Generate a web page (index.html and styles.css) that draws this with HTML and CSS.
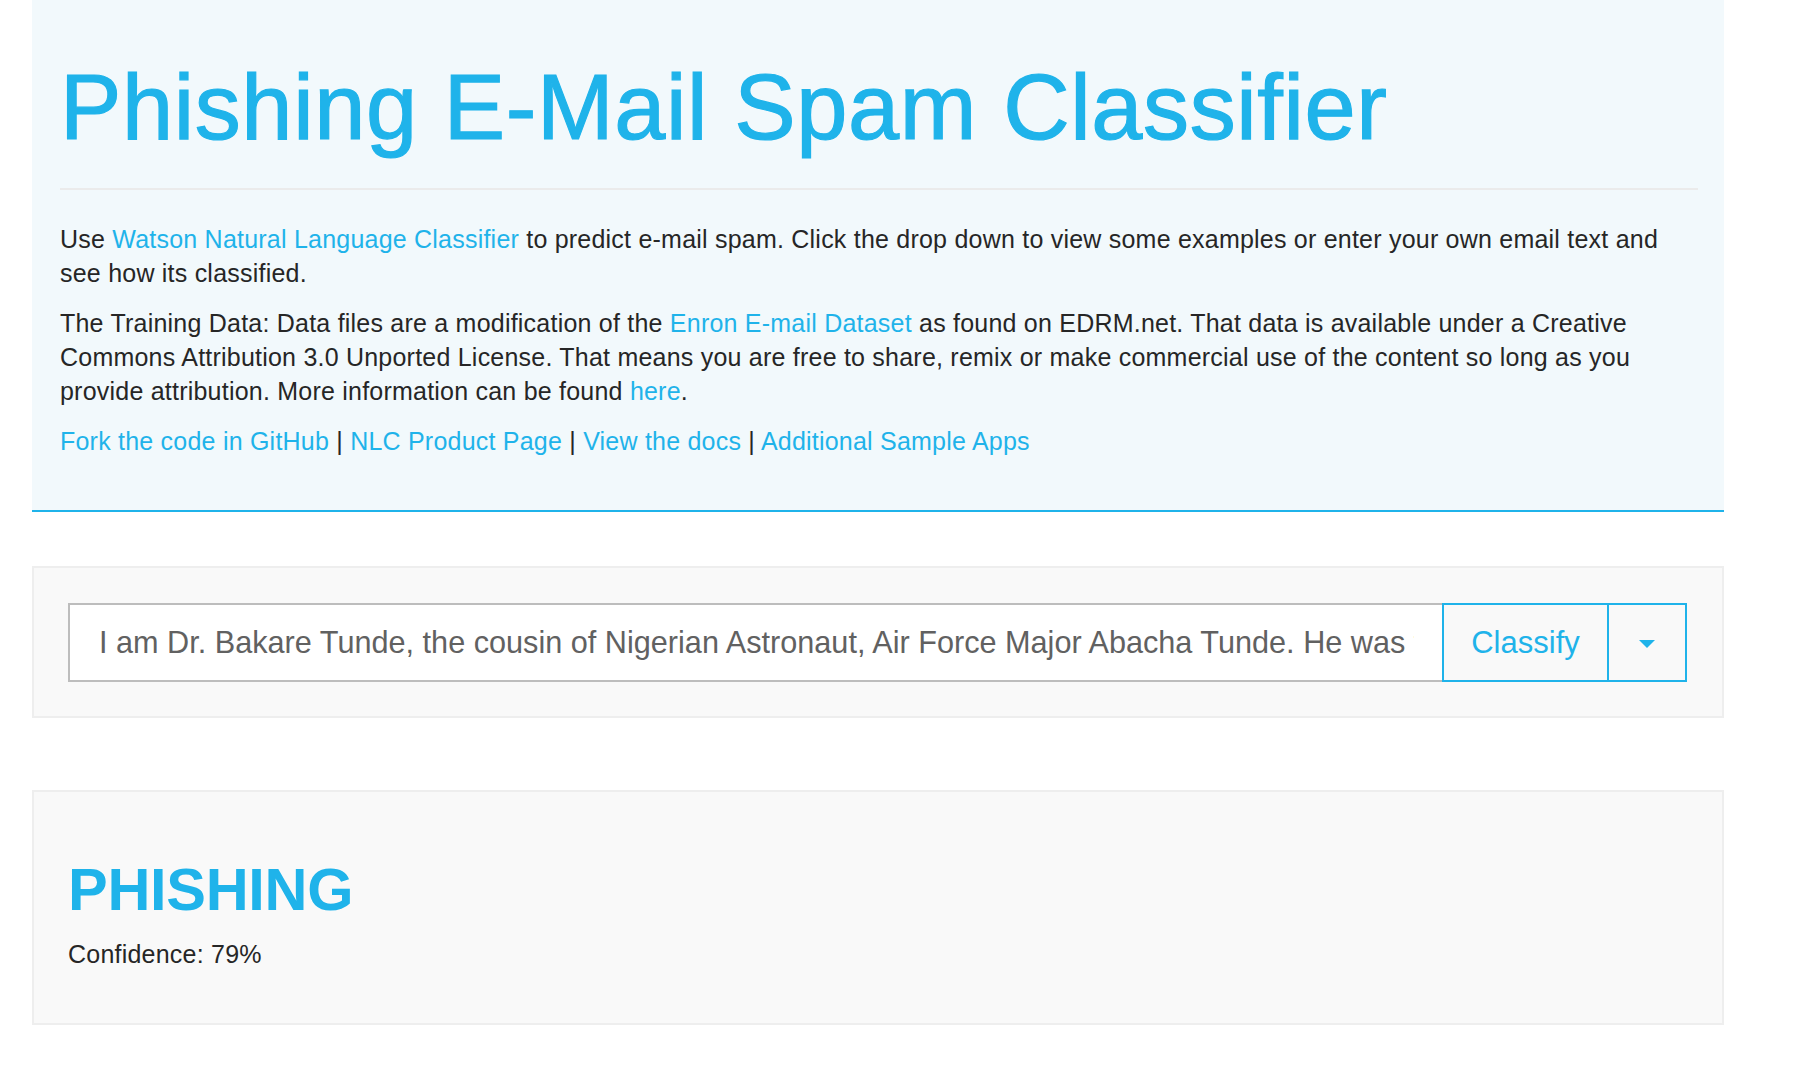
FILE: index.html
```html
<!DOCTYPE html>
<html lang="en">
<head>
<meta charset="utf-8">
<title>Phishing E-Mail Spam Classifier</title>
<link rel="stylesheet" href="styles.css">
</head>
<body>
<div class="page">
  <header class="jumbotron">
    <h1 class="title">Phishing E-Mail Spam Classifier</h1>
    <hr class="rule">
    <p class="lead">Use <a href="#">Watson Natural Language Classifier</a> to predict e-mail spam. Click the drop down to view some examples or enter your own email text and see how its classified.</p>
    <p class="lead">The Training Data: Data files are a modification of the <a href="#">Enron E-mail Dataset</a> as found on EDRM.net. That data is available under a Creative Commons Attribution 3.0 Unported License. That means you are free to share, remix or make commercial use of the content so long as you provide attribution. More information can be found <a href="#">here</a>.</p>
    <p class="lead links"><a href="#">Fork the code in GitHub</a> | <a href="#">NLC Product Page</a> | <a href="#">View the docs</a> | <a href="#">Additional Sample Apps</a></p>
  </header>

  <section class="well input-well">
    <div class="input-group">
      <input class="text-input" type="text" value="I am Dr. Bakare Tunde, the cousin of Nigerian Astronaut, Air Force Major Abacha Tunde. He was the first African in space when he made a secret flight to the Salyut 6 space station in 1979.">
      <button class="btn btn-classify" type="button">Classify</button>
      <button class="btn btn-caret" type="button" aria-label="Examples"><span class="caret"></span></button>
    </div>
  </section>

  <section class="well result-well">
    <h2 class="result">PHISHING</h2>
    <p class="confidence">Confidence: 79%</p>
  </section>
</div>
</body>
</html>
```

FILE: styles.css
```css
html, body {
  margin: 0;
  padding: 0;
  background: #ffffff;
}

body {
  font-family: "Liberation Sans", Arial, Helvetica, sans-serif;
  color: #262626;
  font-size: 25px;
  line-height: 34px;
  letter-spacing: 0.22px;
}

a {
  color: #1fb3ea;
  text-decoration: none;
}

.page {
  margin-left: 32px;
  width: 1692px;
}

.jumbotron {
  background: #f2f9fc;
  padding: 57px 26px 52px 28px;
  border-bottom: 2px solid #1fb3ea;
}

.title {
  margin: 0;
  font-size: 92px;
  line-height: 101px;
  font-weight: 400;
  color: #1fb3ea;
  letter-spacing: 0.6px;
  -webkit-text-stroke: 1.2px #1fb3ea;
}

.rule {
  margin: 30px 0 32px;
  border: 0;
  height: 2px;
  background: #ebebeb;
}

.lead {
  margin: 0 0 16px;
}

.lead.links {
  margin: 0;
}

.well {
  background: #f9f9f9;
  border: 2px solid #eeeeee;
}

.input-well {
  margin-top: 54px;
  padding: 35px 35px 34px 34px;
}

.input-group {
  display: flex;
  height: 79px;
}

.text-input {
  flex: 1;
  min-width: 0;
  height: 79px;
  box-sizing: border-box;
  margin: 0;
  padding: 0 28px 0 29px;
  border: 2px solid #bdbdbd;
  border-right: 0;
  background: #ffffff;
  font-family: "Liberation Sans", Arial, Helvetica, sans-serif;
  font-size: 30.65px;
  color: #616161;
  outline: none;
}

.btn {
  box-sizing: border-box;
  height: 79px;
  margin: 0;
  border: 2px solid #1fb3ea;
  background: #f9f9f9;
  color: #1fb3ea;
  font-family: "Liberation Sans", Arial, Helvetica, sans-serif;
  font-size: 31px;
  padding: 0;
  display: flex;
  align-items: center;
  justify-content: center;
}

.btn-classify {
  width: 167px;
}

.btn-caret {
  width: 78px;
  border-left: 0;
}

.caret {
  width: 0;
  height: 0;
  border-left: 8.5px solid transparent;
  border-right: 8.5px solid transparent;
  border-top: 8.5px solid #1fb3ea;
  margin-top: 2px;
}

.result-well {
  margin-top: 72px;
  padding: 64px 34px 52px 34px;
}

.result {
  margin: 0;
  font-size: 59.5px;
  line-height: 68px;
  font-weight: 700;
  color: #1fb3ea;
  letter-spacing: -0.3px;
}

.confidence {
  margin: 13px 0 0;
  color: #262626;
}
```
